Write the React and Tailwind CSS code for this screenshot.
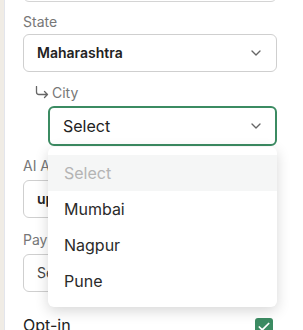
import { ChevronDown, Check } from "lucide-react";

function Chevron() {
  return <ChevronDown className="w-4 h-4 text-[#666]" strokeWidth={2} />;
}

function Field({ label, children }) {
  return (
    <div className="flex flex-col">
      <label className="text-sm leading-5 text-[#777]">{label}</label>
      <div className="mt-1">{children}</div>
    </div>
  );
}

export default function App() {
  const cities = ["Mumbai", "Nagpur", "Pune"];
  return (
    <div
      className="w-[303px] h-[330px] overflow-hidden flex bg-white"
      style={{ fontFamily: "Inter, 'Noto Sans', sans-serif" }}
    >
      <div className="w-[4px] bg-[#f0ece5] border-r border-[#e3e5ec] box-content" />
      <div className="flex-1 pl-[18px] pr-[26px]">
        <div className="-mt-[36px] h-[38px] rounded-md border border-[#d4d4d4]" />

        <div className="mt-[10px] flex flex-col">
          <label className="text-sm leading-5 text-[#777]">State</label>
          <div className="mt-[2px] h-[38px] rounded-md border border-[#cfcfcf] flex items-center justify-between pl-[13px] pr-[12px]">
            <span className="text-sm font-semibold text-[#222]">Maharashtra</span>
            <Chevron />
          </div>
        </div>

        <div className="relative mt-[11px] ml-[25px]">
          <div className="flex items-end h-5 -ml-[13px]">
            <svg width="14" height="13" viewBox="0 0 14 13" className="mb-[4px] text-[#666]">
              <path
                d="M1.5 0.5 V6 Q1.5 8.5 4 8.5 H12.5 M9.5 5.5 L12.5 8.5 L9.5 11.5"
                fill="none"
                stroke="currentColor"
                strokeWidth="1.3"
                strokeLinecap="round"
                strokeLinejoin="round"
              />
            </svg>
            <span className="text-sm leading-5 text-[#777] ml-[3px]">City</span>
          </div>
          <div className="mt-[3px] h-[40px] rounded-md border-2 border-[#3b8b62] flex items-center justify-between pl-[13px] pr-[11px]">
            <span className="text-base text-[#222]">Select</span>
            <Chevron />
          </div>

          <div className="absolute z-10 left-0 right-0 top-[64px] bg-white rounded-md shadow-[0_4px_14px_rgba(0,0,0,0.16)] py-[8px]">
            <div className="h-[36px] flex items-center pl-[16px] bg-[#f5f6f6] text-base text-[#b4b4b4]">
              Select
            </div>
            {cities.map((c) => (
              <div key={c} className="h-[36px] flex items-center pl-[16px] text-base text-[#2a2a2a]">
                {c}
              </div>
            ))}
          </div>
        </div>

        <div className="mt-[10px]">
          <Field label="AI Assistant">
            <div className="h-[38px] rounded-md border border-[#cfcfcf] flex items-center pl-[13px]">
              <span className="text-sm font-semibold text-[#222]">upi</span>
            </div>
          </Field>
        </div>

        <div className="mt-[12px]">
          <Field label="Payment">
            <div className="h-[38px] rounded-md border border-[#cfcfcf] flex items-center pl-[13px]">
              <span className="text-sm text-[#444]">Select</span>
            </div>
          </Field>
        </div>

        <div className="mt-[21px] flex items-center justify-between pr-[4px]">
          <span className="text-base leading-6 text-[#222]">Opt-in</span>
          <span className="w-[18px] h-[18px] rounded-[3px] bg-[#3b8b62] flex items-center justify-center mt-[4px]">
            <Check className="w-[14px] h-[14px] text-white" strokeWidth={3} />
          </span>
        </div>
      </div>
    </div>
  );
}
